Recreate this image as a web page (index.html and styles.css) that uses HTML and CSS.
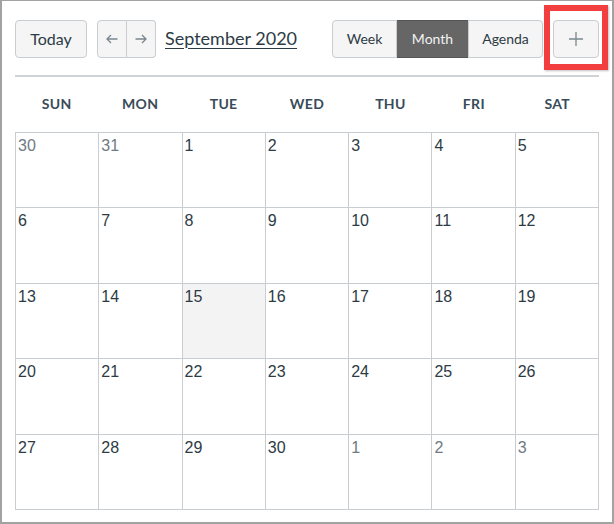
FILE: index.html
```html
<!DOCTYPE html>
<html>
<head>
<meta charset="utf-8">
<link rel="stylesheet" href="styles.css">
</head>
<body>
<div class="frame">
  <div class="toolbar">
    <button class="btn today">Today</button>
    <div class="nav">
      <button class="nav-btn" aria-label="Previous">
        <svg width="12" height="10" viewBox="0 0 12 10"><path d="M11.5 5H1M5 1L1 5l4 4" fill="none" stroke="#7a8790" stroke-width="1.3"/></svg>
      </button>
      <button class="nav-btn" aria-label="Next">
        <svg width="12" height="10" viewBox="0 0 12 10"><path d="M0.5 5H11M7 1l4 4-4 4" fill="none" stroke="#7a8790" stroke-width="1.3"/></svg>
      </button>
    </div>
    <span class="title">September 2020</span>
    <div class="views">
      <button class="view week">Week</button>
      <button class="view month active">Month</button>
      <button class="view agenda">Agenda</button>
    </div>
    <div class="add-wrap">
      <button class="btn add" aria-label="Add">
        <svg width="14" height="14" viewBox="0 0 14 14"><path d="M7 0v14M0 7h14" fill="none" stroke="#7a8790" stroke-width="1.3"/></svg>
      </button>
      <div class="highlight"></div>
    </div>
  </div>
  <div class="rule"></div>
  <div class="dow">
    <div>SUN</div><div>MON</div><div>TUE</div><div>WED</div><div>THU</div><div>FRI</div><div>SAT</div>
  </div>
  <div class="grid">
    <div class="cell other">30</div><div class="cell other">31</div><div class="cell">1</div><div class="cell">2</div><div class="cell">3</div><div class="cell">4</div><div class="cell">5</div>
    <div class="cell">6</div><div class="cell">7</div><div class="cell">8</div><div class="cell">9</div><div class="cell">10</div><div class="cell">11</div><div class="cell">12</div>
    <div class="cell">13</div><div class="cell">14</div><div class="cell current">15</div><div class="cell">16</div><div class="cell">17</div><div class="cell">18</div><div class="cell">19</div>
    <div class="cell">20</div><div class="cell">21</div><div class="cell">22</div><div class="cell">23</div><div class="cell">24</div><div class="cell">25</div><div class="cell">26</div>
    <div class="cell">27</div><div class="cell">28</div><div class="cell">29</div><div class="cell">30</div><div class="cell other">1</div><div class="cell other">2</div><div class="cell other">3</div>
  </div>
</div>
</body>
</html>
```
FILE: styles.css
```css
* { box-sizing: border-box; }
html, body { margin: 0; padding: 0; background: #fff; }
body { font-family: Lato, "Liberation Sans", sans-serif; color: #2d3b45; }

.frame {
  width: 614px;
  height: 524px;
  border: 2px solid #a2a2a2;
  border-top-width: 1px;
  padding: 19px 13px 0 13px;
}

.toolbar {
  display: flex;
  align-items: center;
  height: 38px;
}

.btn, .nav-btn, .view {
  font-family: Lato, "Liberation Sans", sans-serif;
  background: #f5f5f5;
  border: 1px solid #c7cdd1;
  color: #2d3b45;
  padding: 0 0 2px 0;
  margin: 0;
  height: 38px;
  display: flex;
  align-items: center;
  justify-content: center;
}
.nav-btn, .add { padding: 0; }

.today {
  width: 72px;
  border-radius: 4px;
  font-size: 16px;
}

.nav {
  display: flex;
  margin-left: 10px;
}
.nav-btn {
  width: 30px;
}
.nav-btn:first-child {
  border-radius: 4px 0 0 4px;
}
.nav-btn:last-child {
  width: 29px;
  border-left: none;
  border-radius: 0 4px 4px 0;
}

.title {
  margin-left: 9px;
  padding-bottom: 3px;
  font-size: 18px;
  text-decoration: underline;
  text-underline-offset: 3px;
  text-decoration-thickness: 1px;
  color: #2d3b45;
}

.views {
  display: flex;
  margin-left: auto;
}
.view {
  font-size: 14px;
}
.week {
  width: 65px;
  border-radius: 4px 0 0 4px;
}
.month {
  width: 71px;
  border-left: none;
  border-right: none;
}
.agenda {
  width: 75px;
  border-radius: 0 4px 4px 0;
}
.view.active {
  background: #666666;
  border-color: #555555;
  color: #f2f2f2;
}

.add-wrap {
  position: relative;
  margin-left: 10px;
}
.add {
  width: 46px;
  border-radius: 4px;
}
.highlight {
  position: absolute;
  left: -9px;
  top: -15px;
  width: 64px;
  height: 65px;
  border: 6px solid #f23e3e;
  box-shadow: 1px 1px 2px rgba(0,0,0,0.25);
  pointer-events: none;
}

.rule {
  margin-top: 17px;
  height: 2px;
  background: #cfd3d6;
}

.dow {
  display: grid;
  grid-template-columns: repeat(7, 1fr);
  height: 55px;
  align-items: center;
  text-align: center;
  font-weight: 700;
  font-size: 14px;
  color: #394b58;
  letter-spacing: 0.3px;
  padding-bottom: 2px;
}

.grid {
  display: grid;
  grid-template-columns: repeat(7, 1fr);
  grid-template-rows: repeat(5, 75.4px);
  border-top: 1px solid #c7cdd1;
  border-left: 1px solid #c7cdd1;
  width: 584px;
}
.cell {
  border-right: 1px solid #c7cdd1;
  border-bottom: 1px solid #c7cdd1;
  font-family: "Liberation Sans", Arial, sans-serif;
  font-size: 16px;
  padding: 4px 2px;
  color: #2d3b45;
}
.cell.other {
  color: #6f7a83;
}
.cell.current {
  background: #f3f3f3;
}
```
